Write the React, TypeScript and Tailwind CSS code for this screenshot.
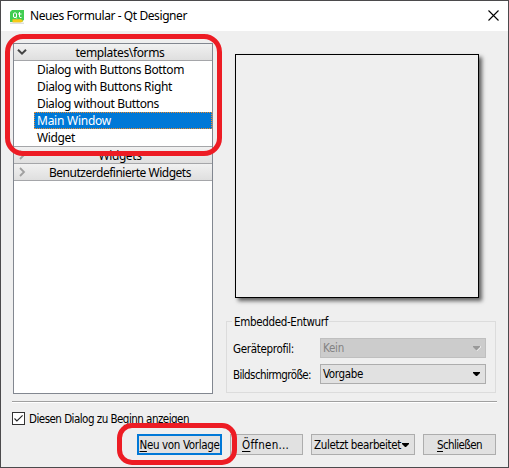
import React from "react";

const ui = "font-['DejaVu_Sans_Condensed','DejaVu_Sans',sans-serif] [font-stretch:condensed]";
const segoe = "font-['Noto_Sans','Open_Sans',sans-serif] [font-stretch:normal]";

const forms = [
  { label: "Dialog with Buttons Bottom", width: 147 },
  { label: "Dialog with Buttons Right", width: 135 },
  { label: "Dialog without Buttons", width: 122 },
  { label: "Main Window", width: 74, selected: true },
  { label: "Widget", width: 38 },
];

function Caption({ children, width, className = "" }: { children: React.ReactNode; width: number; className?: string }) {
  const ref = React.useRef<HTMLSpanElement>(null);
  React.useLayoutEffect(() => {
    const el = ref.current;
    if (!el) return;
    const fit = () => {
      el.style.letterSpacing = "0px";
      const n = (el.textContent ?? "").length;
      el.style.letterSpacing = `${(width - el.getBoundingClientRect().width) / n}px`;
    };
    fit();
    document.fonts?.ready.then(fit);
  }, [width]);
  return (
    <span ref={ref} className={`inline-block shrink-0 whitespace-pre ${className}`}>
      {children}
    </span>
  );
}

function Chevron({ down = false }: { down?: boolean }) {
  return (
    <svg width="10" height="10" viewBox="0 0 10 10" fill="none" className="shrink-0">
      {down ? (
        <path d="M1 2.7 5 6.7 9 2.7" stroke="#444" strokeWidth="2" />
      ) : (
        <path d="M3 1 7 5 3 9" stroke="#a0a0a0" strokeWidth="1.8" />
      )}
    </svg>
  );
}

function Section({ label, width, open = false }: { label: string; width: number; open?: boolean }) {
  return (
    <div className="flex h-[17px] items-center border-b border-[#a5a6a9] bg-gradient-to-b from-[#f1f1f1] to-[#dfdfdf] pl-[3px]">
      <Chevron down={open} />
      <div className="flex flex-1 justify-center pt-px pl-px">
        <Caption width={width}>{label}</Caption>
      </div>
    </div>
  );
}

function DropArrow({ disabled = false }: { disabled?: boolean }) {
  return (
    <svg width="9" height="6" viewBox="0 0 9 6" className="shrink-0">
      {disabled && <path d="M9 1 5 5V6L9 2Z" fill="#fff" />}
      <path d="M1 1H8V2L5 5H4L1 2Z" fill={disabled ? "#999" : "#000"} />
    </svg>
  );
}

function Combo({ label, width, disabled = false }: { label: string; width: number; disabled?: boolean }) {
  return (
    <div className={`flex h-5 w-[166px] items-center justify-between border pr-[4px] pl-[2px] ${disabled ? "border-[#bfbfbf] bg-[#ccc] text-[#838383]" : "border-[#adadad] bg-[#e1e1e1]"}`}>
      <Caption width={width}>{label}</Caption>
      <DropArrow disabled={disabled} />
    </div>
  );
}

export default function App() {
  return (
    <div className={`relative flex h-[468px] w-[509px] flex-col overflow-hidden border border-[#4b4a4c] bg-[#efefef] text-[11.5px] leading-[14px] text-black ${ui}`}>
      <header className={`flex h-[30px] shrink-0 items-center bg-white pr-[9px] pl-[9px] ${segoe}`}>
        <svg width="15" height="14" viewBox="0 0 15 14" className="mt-px shrink-0">
          <path d="M2 0H14V9.5L12 12H0V2Z" fill="#41cd52" />
          <path d="M3.5 3.5 4 3H6L6.5 3.5V7L6 7.5H4L3.5 7ZM5.2 6.6 6.7 8.4M9.5 2V7L10 7.5H11.5M8 4H11.5" fill="none" stroke="#fff" strokeWidth="1" />
          <path d="M2.5 9.3H11L13.3 11 11 12.4H2.5Z" fill="#f7c917" />
          <path d="M0 13.2H14" stroke="#c4c8c4" strokeWidth="0.8" />
        </svg>
        <Caption width={157} className="ml-[5px] text-[12px] leading-[18px]">Neues Formular - Qt Designer</Caption>
        <svg width="11" height="11" viewBox="0 0 11 11" className="mb-px ml-auto">
          <path d="m.5.5 10 10M10.5.5l-10 10" stroke="#000" strokeWidth="1.1" />
        </svg>
      </header>

      <main className="flex h-[370px] shrink-0 pt-[12px] pl-[12px]">
        <section className={`h-[351px] w-[200px] shrink-0 border border-[#828790] bg-white text-[12px] leading-[16px] ${segoe}`}>
          <Section label={"templates\\forms"} width={89} open />
          {forms.map((f) => (
            <div key={f.label} className="flex h-[17px] pl-[20px]">
              <div className={`flex flex-1 items-center pl-[3px] ${f.selected ? "bg-[#0078d7] text-white outline-1 -outline-offset-1 outline-dotted outline-[#ef8a28]" : ""}`}>
                <Caption width={f.width}>{f.label}</Caption>
              </div>
            </div>
          ))}
          <div className="border-t border-[#a5a6a9]">
            <Section label="Widgets" width={43} />
            <Section label="Benutzerdefinierte Widgets" width={142} />
          </div>
        </section>

        <section className="ml-[13px] flex w-[270px] flex-col">
          <div className="mt-[11px] ml-[9px] h-[244px] w-[244px] shrink-0 border border-black shadow-[3px_3px_4px_#00000099]" />
          <fieldset className="mt-[16px] h-[79px] border border-[#dcdcdc] pt-0 pl-[5px]">
            <legend className="ml-0 h-[14px] pr-[1px] pl-[2px] leading-[14px]">
              <Caption width={94} className="pt-px">Embedded-Entwurf</Caption>
            </legend>
            <div className="mt-[10px] flex items-center">
              <div className="w-[88px] pt-px pl-[1px]"><Caption width={61}>Geräteprofil:</Caption></div>
              <Combo label="Kein" width={21} disabled />
            </div>
            <div className="mt-[6px] flex items-center">
              <div className="w-[88px] pt-px pl-[1px]"><Caption width={78}>Bildschirmgröße:</Caption></div>
              <Combo label="Vorgabe" width={40} />
            </div>
          </fieldset>
        </section>
      </main>

      <hr className="mx-[11px] h-[2px] shrink-0 border-t border-b border-t-[#a0a0a0] border-b-white" />
      <label className="mt-[9px] ml-[11px] flex h-[13px] shrink-0 items-center">
        <span className="flex size-[13px] items-center justify-center border border-[#333] bg-white">
          <svg width="9" height="9" viewBox="0 0 9 9" fill="none">
            <path d="m.5 4.5 2.4 2.4L8.6 1.3" stroke="#222" strokeWidth="1.1" />
          </svg>
        </span>
        <Caption width={160} className="ml-[4px] pt-px">Diesen Dialog zu Beginn anzeigen</Caption>
      </label>

      <footer className="mt-[9px] flex h-[21px] shrink-0 gap-[8px] pl-[136px]">
        <button className="flex w-[85px] items-center justify-center border-2 border-[#0078d7] bg-[#e1e1e1]">
          <Caption width={80} className="pt-px"><u className="underline-offset-2">N</u>eu von Vorlage</Caption>
        </button>
        <button className="flex w-[73px] items-center border border-[#adadad] bg-[#e1e1e1] pl-[11px]">
          <Caption width={47} className="pt-px"><u className="underline-offset-2">Ö</u>ffnen...</Caption>
        </button>
        <button className="flex w-[104px] items-center border border-[#adadad] bg-[#e1e1e1] pl-[2px]">
          <Caption width={87} className="pt-px">Zuletzt bearbeitet</Caption>
          <DropArrow />
        </button>
        <button className="flex w-[73px] items-center justify-center border border-[#adadad] bg-[#e1e1e1]">
          <Caption width={45} className="pt-px"><u className="underline-offset-2">S</u>chließen</Caption>
        </button>
      </footer>

      <div className="pointer-events-none absolute top-[33px] left-[4px] h-[122px] w-[217px] rounded-[18px] border-[5px] border-[#ed1c24]" />
      <div className="pointer-events-none absolute top-[422px] left-[116px] h-[42px] w-[120px] rounded-[15px] border-[5px] border-[#ed1c24]" />
    </div>
  );
}
